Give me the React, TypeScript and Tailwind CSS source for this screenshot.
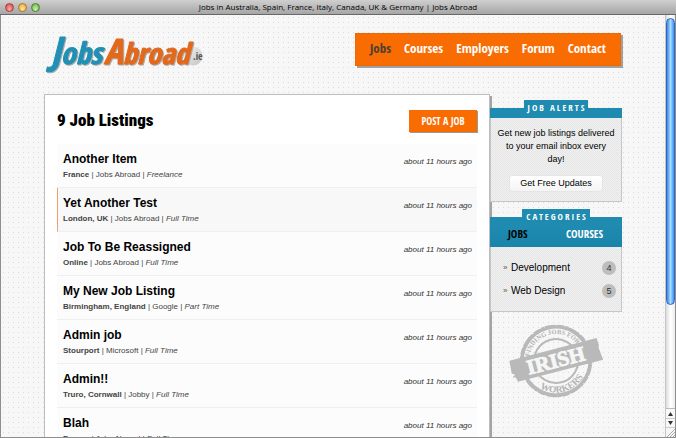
import type { ReactNode } from 'react';

type Job = { title: string; place: string; company: string; kind: string; active?: boolean };

const jobs: Job[] = [
  { title: 'Another Item', place: 'France', company: 'Jobs Abroad', kind: 'Freelance' },
  { title: 'Yet Another Test', place: 'London, UK', company: 'Jobs Abroad', kind: 'Full Time', active: true },
  { title: 'Job To Be Reassigned', place: 'Online', company: 'Jobs Abroad', kind: 'Full Time' },
  { title: 'My New Job Listing', place: 'Birmingham, England', company: 'Google', kind: 'Part Time' },
  { title: 'Admin job', place: 'Stourport', company: 'Microsoft', kind: 'Full Time' },
  { title: 'Admin!!', place: 'Truro, Cornwall', company: 'Jobby', kind: 'Full Time' },
  { title: 'Blah', place: 'France', company: 'Jobs Abroad', kind: 'Full Time' },
];

const navItems = ['Jobs', 'Courses', 'Employers', 'Forum', 'Contact'];
const categories = [
  { name: 'Development', count: 4 },
  { name: 'Web Design', count: 5 },
];

function TitleBar() {
  return (
    <header className="flex h-[15px] shrink-0 items-center border-b border-[#686868] bg-linear-to-b from-[#cfcfcf] to-[#a6a6a6] px-[5px]">
      <div className="flex w-[36px] gap-[4px]">
        <button aria-label="Close" className="size-[9px] rounded-full border border-[#a04444] bg-radial-[at_50%_75%] from-[#ffb0a8] to-[#d8323a]" />
        <button aria-label="Minimise" className="size-[9px] rounded-full border border-[#a87830] bg-radial-[at_50%_75%] from-[#ffe9a0] to-[#ee9a2c]" />
        <button aria-label="Zoom" className="size-[9px] rounded-full border border-[#4d7f3a] bg-radial-[at_50%_75%] from-[#d2f5a8] to-[#57a83c]" />
      </div>
      <p className="flex-1 text-center font-['Open_Sans','Noto_Sans',sans-serif] text-[8px] leading-[14px] font-medium whitespace-nowrap text-black">
        Jobs in Australia, Spain, France, Italy, Canada, UK &amp; Germany | Jobs Abroad
      </p>
      <div className="w-[36px]" />
    </header>
  );
}

function Logo() {
  return (
    <svg viewBox="0 0 162 48" className="h-[48px] w-[162px] overflow-visible" role="img" aria-label="Jobs Abroad.ie">
      <defs>
        <linearGradient id="disc" x1="0" y1="0" x2="1" y2="1">
          <stop offset="0" stopColor="#f4f4f4" />
          <stop offset="1" stopColor="#c4c4c4" />
        </linearGradient>
      </defs>
      <circle cx="149" cy="26" r="9.5" fill="url(#disc)" />
      <g
        className="drop-shadow-[1px_1px_0_#aaa]"
        fontFamily="'Open Sans Condensed', 'Roboto Condensed', sans-serif"
        fontStyle="italic"
        fontWeight="700"
        strokeWidth="1"
        strokeLinejoin="round"
      >
        <text x="7" y="34" fontSize="30" fill="#2090b4" stroke="#2090b4">
          <tspan fontSize="38">J</tspan>obs
        </text>
        <text x="60" y="34" fontSize="29" fill="#e2691c" stroke="#e2691c">
          <tspan fontSize="35">A</tspan>broad
        </text>
      </g>
      <text x="149" y="30" fill="#555" fontFamily="'Open Sans Condensed', sans-serif" fontSize="10">.ie</text>
    </svg>
  );
}

function Nav() {
  return (
    <nav className="mt-[3px] flex h-[33px] items-center gap-[13px] border border-[#e86a0a] bg-[#f96c02] px-[14px] pb-[3px] font-['Open_Sans_Condensed','Roboto_Condensed',sans-serif] text-[13px] leading-[20px] font-bold text-white shadow-[2px_2px_0_#a0a0a0]">
      {navItems.map((item, i) => (
        <a key={item} href="#" className={i === 0 ? 'text-[#4b3f35]' : ''}>
          {item}
        </a>
      ))}
    </nav>
  );
}

function JobRow({ job }: { job: Job }) {
  return (
    <li
      className={
        job.active
          ? 'flex h-[44px] items-start justify-between border-b border-l border-b-[#efefef] border-l-[#f0a070] bg-[#f8f8f8] px-[5px] pt-[7px]'
          : 'flex h-[44px] items-start justify-between border-b border-b-[#efefef] bg-[#fcfcfc] pt-[7px] pr-[5px] pl-[6px]'
      }
    >
      <div>
        <h2 className="text-[12px] leading-[16px] font-bold text-black">
          <a href="#">{job.title}</a>
        </h2>
        <p className="text-[8px] leading-[16px] text-[#444]">
          <b>{job.place}</b> | {job.company} | <i>{job.kind}</i>
        </p>
      </div>
      <time className="pt-[3px] text-[8px] leading-[16px] text-[#333] italic">about 11 hours ago</time>
    </li>
  );
}

function BoxTitle({ children }: { children: ReactNode }) {
  return (
    <div className="flex h-[18px] justify-center bg-[linear-gradient(transparent_8px,#1f8bb0_8px)]">
      <h2 className="bg-[#1f8bb0] pr-[2px] pl-[4px] font-['Open_Sans_Condensed',sans-serif] text-[9px] leading-[16px] font-bold tracking-[2px] text-white">
        {children}
      </h2>
    </div>
  );
}

const boxBody =
  'border border-t-0 border-[#c6c6c6] bg-[#f0f0f0] bg-[repeating-conic-gradient(#e6e6e6_0_25%,#f0f0f0_0_50%)] bg-size-[2px_2px]';

function Sidebar() {
  return (
    <aside className="w-[132px] shrink-0 pt-[6px]">
      <section>
        <BoxTitle>JOB ALERTS</BoxTitle>
        <div className={`${boxBody} flex h-[84px] flex-col items-center justify-between px-[5px] pt-[9px] pb-[10px]`}>
          <p className="text-center text-[9px] leading-[13px] text-black">
            Get new job listings delivered
            <br />
            to your email inbox every
            <br />
            day!
          </p>
          <button className="h-[15px] w-[92px] rounded-[2px] bg-linear-to-b from-white to-[#f4f4f4] text-[9px] leading-[15px] text-black shadow-[0_0_1px_#bbb]">
            Get Free Updates
          </button>
        </div>
      </section>
      <section className="mt-[7px]">
        <BoxTitle>CATEGORIES</BoxTitle>
        <div className="flex h-[20px] justify-between bg-linear-to-b from-[#1f8bb0] to-[#1a83aa] pr-[19px] pl-[18px] font-['Open_Sans_Condensed',sans-serif] text-[11px] leading-[14px] font-bold">
          <button className="h-[14px] text-black">JOBS</button>
          <button className="h-[14px] text-white">COURSES</button>
        </div>
        <ul className={`${boxBody} flex flex-col gap-[9px] px-[5px] pt-[14px] pb-[13px]`}>
          {categories.map((c) => (
            <li key={c.name} className="flex h-[14px] items-center text-[10px] leading-[14px] text-black">
              <span className="w-[15px] pl-[7px] text-[8px] text-[#555]">»</span>
              <a href="#" className="flex-1">{c.name}</a>
              <span className="size-[14px] rounded-full bg-[#bdbdbd] text-center text-[9px] text-[#333]">{c.count}</span>
            </li>
          ))}
        </ul>
      </section>
      <Stamp />
    </aside>
  );
}

function Stamp() {
  return (
    <svg viewBox="0 0 94 76" className="mt-[11px] ml-[20px] h-[76px] w-[94px] overflow-visible" role="img" aria-label="Finding jobs for Irish workers">
      <defs>
        <path id="arc-top" d="M19 38a27 27 0 0 1 54 0" />
        <path id="arc-bottom" d="M14.500 38a31.500 31.500 0 0 0 63 0" />
      </defs>
      <g transform="rotate(-14.5 46 38)">
        <g fill="none" stroke="#b9b9b9">
          <circle cx="46" cy="38" r="34" strokeWidth="3.4" />
          <circle cx="46" cy="38" r="34.6" strokeWidth="3.4" strokeDasharray="7 1.3 3 .8 11 1.6" />
          <circle cx="46" cy="38" r="22" strokeWidth="2" />
        </g>
        <g fill="#b4b4b4" fontFamily="'Liberation Serif', serif" fontWeight="700" textAnchor="middle">
          <text fontSize="6.6">
            <textPath href="#arc-top" startOffset="50%">FINDING JOBS FOR</textPath>
          </text>
          <text fontSize="9.5">
            <textPath href="#arc-bottom" startOffset="50%">WORKERS</textPath>
          </text>
        </g>
        <path d="M1 26 91 26 91.5 34 90.5 35 92 48.500 4 48.500 3 44 0 43 3 41 0 39Z" fill="#b9b9b9" />
        <text x="46" y="44.5" fill="#f6f6f6" stroke="#f6f6f6" strokeWidth=".9" fontFamily="'Liberation Serif', serif" fontWeight="700" fontSize="21" textAnchor="middle">
          IRISH
        </text>
      </g>
    </svg>
  );
}

function Scrollbar() {
  return (
    <div className="flex w-[10px] shrink-0 flex-col border-l border-[#c4c4c4] bg-linear-to-r from-[#dcdcdc] via-white to-[#ececec] pt-[3px]">
      <div className="w-full flex-[286] rounded-full border border-[#2f68c0] bg-linear-to-r from-[#3f86e0] via-[#a5dcff] to-[#3d8ff0]" />
      <div className="w-full flex-[103]" />
      <button aria-label="Scroll up" className="flex h-[10px] items-center justify-center border-t border-[#bbb] bg-[#f8f8f8]">
        <svg viewBox="0 0 5 4" className="h-[4px] w-[5px] fill-[#333]" aria-hidden="true">
          <path d="M2.500 0 5 4H0Z" />
        </svg>
      </button>
      <button aria-label="Scroll down" className="flex h-[10px] items-center justify-center border-y border-[#ccc] bg-[#f8f8f8]">
        <svg viewBox="0 0 5 4" className="h-[4px] w-[5px] fill-[#333]" aria-hidden="true">
          <path d="M0 0H5L2.500 4Z" />
        </svg>
      </button>
      <svg viewBox="0 0 9 9" className="h-[9px] w-full bg-[#f6f6f6]" stroke="#999" strokeWidth=".8" aria-hidden="true">
        <path d="M1 9 9 1M4 9l5-5M7 9l2-2" />
      </svg>
    </div>
  );
}

export default function App() {
  return (
    <div className="flex h-screen flex-col overflow-hidden bg-white font-['Liberation_Sans',Arial,sans-serif]">
      <TitleBar />
      <div className="flex min-h-0 flex-1 border-x border-b border-[#8e8e8e]">
        <main className="min-w-0 flex-1 overflow-hidden bg-[#f7f7f7] bg-[radial-gradient(circle_at_center,#dcdcdc_0_0.5px,transparent_1px)] bg-size-[5px_5px] px-[43px] pt-[15px]">
          <div className="flex h-[64px] items-start justify-between pr-[1px]">
            <a href="#">
              <Logo />
            </a>
            <Nav />
          </div>
          <div className="flex items-start">
            <section className="min-w-0 flex-1 border border-[#bdbdbd] bg-white px-[12px] pb-[20px] shadow-[2px_2px_0_#a4a4a4]">
              <div className="flex h-[49px] items-start justify-between pt-[15px]">
                <h1 className="font-['Roboto_Condensed',sans-serif] text-[17px] leading-[20px] font-black text-black">9 Job Listings</h1>
                <button className="h-[22px] w-[68px] bg-[#f96c02] font-['Open_Sans_Condensed',sans-serif] text-[10px] leading-[20px] font-bold text-white shadow-[1px_1px_0_#999]">
                  POST A JOB
                </button>
              </div>
              <ul>
                {jobs.map((job) => (
                  <JobRow key={job.title} job={job} />
                ))}
              </ul>
            </section>
            <Sidebar />
          </div>
        </main>
        <Scrollbar />
      </div>
    </div>
  );
}
